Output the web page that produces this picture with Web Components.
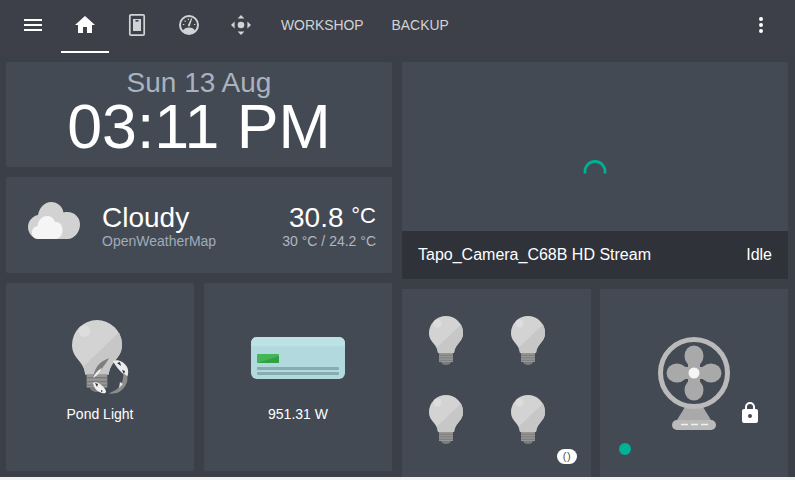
<!DOCTYPE html>
<html>
<head>
<meta charset="utf-8">
<title>Dashboard</title>
<style>
  html { background: #f1f3f3; }
  body { margin: 0; width: 795px; height: 480px; overflow: hidden; font-family: "Liberation Sans", Arial, sans-serif; }
</style>
</head>
<body>
<ha-dashboard>
  <top-bar slot="header"></top-bar>

  <clock-card slot="left"></clock-card>
  <weather-card slot="left"></weather-card>
  <div slot="left" style="display:grid;grid-template-columns:188px 188px;gap:10px">
    <tile-card label="Pond Light"><pond-icon></pond-icon></tile-card>
    <tile-card label="951.31 W"><ac-icon></ac-icon></tile-card>
  </div>

  <camera-card slot="right"></camera-card>
  <div slot="right" style="display:grid;grid-template-columns:189px 188px;gap:9px">
    <bulbs-card></bulbs-card>
    <fan-card></fan-card>
  </div>
</ha-dashboard>

<script>
const MDI = {
  menu: "M3,6H21V8H3V6M3,11H21V13H3V11M3,16H21V18H3V16Z",
  home: "M10,20V14H14V20H19V12H22L12,3L2,12H5V20H10Z",
  dots: "M12,16A2,2 0 0,1 14,18A2,2 0 0,1 12,20A2,2 0 0,1 10,18A2,2 0 0,1 12,16M12,10A2,2 0 0,1 14,12A2,2 0 0,1 12,14A2,2 0 0,1 10,12A2,2 0 0,1 12,10M12,4A2,2 0 0,1 14,6A2,2 0 0,1 12,8A2,2 0 0,1 10,6A2,2 0 0,1 12,4Z",
  lock: "M12,17A2,2 0 0,0 14,15C14,13.89 13.1,13 12,13A2,2 0 0,0 10,15A2,2 0 0,0 12,17M18,8A2,2 0 0,1 20,10V20A2,2 0 0,1 18,22H6A2,2 0 0,1 4,20V10C4,8.89 4.9,8 6,8H7V6A5,5 0 0,1 12,1A5,5 0 0,1 17,6V8H18M12,3A3,3 0 0,0 9,6V8H15V6A3,3 0 0,0 12,3Z"
};

// shared bulb drawing, 34x49 units
const BULB = `
  <path d="M17 0a17 17 0 0 1 17 17c0 5.500-3 8.500-5 11-1.800 2.300-3.500 4.500-4 9H9c-.5-4.500-2.200-6.700-4-9-2-2.500-5-5.500-5-11A17 17 0 0 1 17 0z" fill="#d3d3d3"/>
  <path d="M32 8.500A17 17 0 0 1 34 17c0 5.500-3 8.500-5 11-1.800 2.300-3.500 4.500-4 9H9c-.2-2-.7-3.800-1.300-5.300z" fill="#c7c7c7"/>
  <circle cx="8.500" cy="7.500" r="4" fill="#dddddd"/>
  <rect x="10" y="37" width="14" height="9" fill="#979797"/>
  <path d="M10 39.300h14M10 41.800h14M10 44.300h14" stroke="#7b7b7b" stroke-width="1"/>
  <path d="M12 46h10c-.5 2-2.500 3-5 3s-4.500-1-5-3z" fill="#7c7c7c"/>`;

class HaDashboard extends HTMLElement {
  constructor() {
    super();
    this.attachShadow({ mode: "open" });
  }
  connectedCallback() {
    this.shadowRoot.innerHTML = `
      <style>
        :host { display: block; height: 477px; background: #3b3f48; overflow: hidden; }
        .columns {
          display: grid;
          grid-template-columns: 386px 386px;
          column-gap: 10px;
          padding: 6px 0 0 6px;
        }
        .col { display: flex; flex-direction: column; gap: 10px; }
      </style>
      <slot name="header"></slot>
      <div class="columns">
        <div class="col"><slot name="left"></slot></div>
        <div class="col"><slot name="right"></slot></div>
      </div>`;
  }
}

class TopBar extends HTMLElement {
  constructor() {
    super();
    this.attachShadow({ mode: "open" });
  }
  connectedCallback() {
    this.shadowRoot.innerHTML = `
      <style>
        :host {
          display: flex;
          height: 56px;
          padding-left: 21px;
          padding-right: 22px;
          background: #3d4049;
          box-sizing: border-box;
          color: #fff;
        }
        svg { width: 24px; height: 24px; fill: currentColor; display: block; }
        .menu { margin: 13px 16px 0 0; width: 24px; }
        .tabs { display: flex; gap: 4px; height: 53px; flex: 1; }
        .tab {
          box-sizing: border-box;
          min-width: 48px;
          height: 53px;
          padding-top: 13px;
          display: flex;
          justify-content: center;
          color: #d2d3d6;
          font-size: 13.900px;
        }
        .tab.active { color: #fff; border-bottom: 2px solid #fff; }
        .tab.text { padding: 17px 12px 0; line-height: 16px; }
        .dots { margin-top: 13px; }
      </style>
      <div class="menu"><svg viewBox="0 0 24 24"><path d="${MDI.menu}"/></svg></div>
      <div class="tabs">
        <div class="tab active"><svg viewBox="0 0 24 24"><path d="${MDI.home}"/></svg></div>
        <div class="tab"><svg viewBox="0 0 24 24">
          <rect x="4.800" y="1.800" width="14.400" height="20.400" rx="1.200" fill="none" stroke="currentColor" stroke-width="1.700"/>
          <rect x="8" y="6" width="8" height="12"/>
          <rect x="10.500" y="7" width="3" height="1.600" fill="#3d4049"/>
        </svg></div>
        <div class="tab"><svg viewBox="0 0 24 24">
          <circle cx="12" cy="12" r="9" fill="none" stroke="currentColor" stroke-width="2"/>
          <path d="M5.500 18c1.500-2.500 3.800-3.600 6.500-3.600s5 1.100 6.500 3.600c-1.700 1.900-4 3-6.500 3s-4.800-1.100-6.500-3z"/>
          <path d="M11 12l3.200-6.800 1 .4-2.300 7.200a1 1 0 0 1-1.900-.8z"/>
          <path d="M5.800 11.500h1.500M7.600 7.600l1 1M11.400 5.500v1.500M16.900 11.500h1.500" stroke="currentColor" stroke-width="1.100"/>
        </svg></div>
        <div class="tab"><svg viewBox="0 0 24 24">
          <circle cx="12" cy="12" r="3.300"/>
          <path d="M12 2l3.400 3.600H8.600zM12 22l-3.400-3.600h6.800zM2 12l3.600-3.400v6.800zM22 12l-3.600 3.400V8.600z"/>
        </svg></div>
        <div class="tab text">WORKSHOP</div>
        <div class="tab text">BACKUP</div>
      </div>
      <svg class="dots" viewBox="0 0 24 24"><path d="${MDI.dots}"/></svg>`;
  }
}

class ClockCard extends HTMLElement {
  constructor() {
    super();
    this.attachShadow({ mode: "open" });
  }
  connectedCallback() {
    this.shadowRoot.innerHTML = `
      <style>
        :host {
          display: block;
          height: 105px;
          background: #444a54;
          border-radius: 2px;
          text-align: center;
          overflow: hidden;
        }
        .date { font-size: 28px; line-height: 28px; color: #a9b3bf; margin-top: 7px; }
        .time { font-size: 62.700px; line-height: 58px; color: #fff; }
      </style>
      <div class="date">Sun 13 Aug</div>
      <div class="time">03:11 PM</div>`;
  }
}

class WeatherCard extends HTMLElement {
  constructor() {
    super();
    this.attachShadow({ mode: "open" });
  }
  connectedCallback() {
    this.shadowRoot.innerHTML = `
      <style>
        :host {
          display: flex;
          height: 96px;
          align-items: center;
          background: #444a54;
          border-radius: 2px;
          padding: 0 16px 0 21px;
          box-sizing: border-box;
        }
        svg { width: 54px; height: 40px; display: block; margin-right: 21px; margin-bottom: 9px; }
        .name { flex: 1; padding-top: 3px; }
        .big { font-size: 28px; line-height: 28px; color: #fff; }
        .small { font-size: 14px; line-height: 16px; color: #9facbb; margin-top: 1px; }
        .temp { text-align: right; padding-top: 3px; }
        .temp .small { color: #b0b7c1; }
        .unit { font-size: 22px; line-height: 0; vertical-align: 4px; }
      </style>
      <svg viewBox="0 0 54 40">
        <path d="M24 1c6.500 0 11.500 4.500 12.500 10.500C38 11 39 11 40.500 11 47.500 11 53 16.500 53 23.500S47.500 38 40.500 38H13C6 38 1 32.500 1 26c0-6 4.500-11 10-12C12.500 6.500 17.500 1 24 1z" fill="#d2d2d2"/>
        <path d="M20 15c4 0 7 2.500 8 6 3.500-.5 7.500 2 7.500 8s-3.500 9-8 9H11c-4.500 0-6-3.500-6-6.500 0-3.500 2.500-6 5.500-6.500.5-5.500 4.500-10 9.500-10z" fill="#f5f5f5"/>
      </svg>
      <div class="name">
        <div class="big">Cloudy</div>
        <div class="small">OpenWeatherMap</div>
      </div>
      <div class="temp">
        <div class="big">30.8 <span class="unit">°C</span></div>
        <div class="small">30 °C / 24.2 °C</div>
      </div>`;
  }
}

class TileCard extends HTMLElement {
  constructor() {
    super();
    this.attachShadow({ mode: "open" });
  }
  connectedCallback() {
    this.shadowRoot.innerHTML = `
      <style>
        :host {
          display: flex;
          flex-direction: column;
          align-items: center;
          height: 188px;
          background: #444a54;
          border-radius: 2px;
        }
        .icon { height: 122px; display: flex; align-items: flex-end; }
        .label { font-size: 14px; line-height: 16px; color: #fff; margin-top: 1px; }
      </style>
      <div class="icon"><slot></slot></div>
      <div class="label">${this.getAttribute("label")}</div>`;
  }
}

class PondIcon extends HTMLElement {
  constructor() {
    super();
    this.attachShadow({ mode: "open" });
  }
  connectedCallback() {
    this.shadowRoot.innerHTML = `
      <style>
        :host { display: block; width: 62px; height: 76px; margin-left: 6px; margin-bottom: 9px; }
        svg { display: block; width: 62px; height: 76px; }
      </style>
      <svg viewBox="0 0 62 76">
        <g transform="scale(1.47)">${BULB}</g>
        <path d="M37 38l-6 3c-5 3-9 9-10 17 4-2 8-6 10-11 2-3 4-5 6-9z" fill="#7e7e7e"/>
        <path d="M21 58c2-5 5-8 9-10-2 5-5 8-9 10z" fill="#f0f0f0"/>
        <path d="M21 63c3-2 8 1 12 6 2 3 1 5-3 4-4-1-8-4-9-10z" fill="#f0f0f0"/>
        <path d="M23 63l3 1-1 3zM29 70l2 1-2 1z" fill="#2f2f2f"/>
        <path d="M41 41c5-2 11 1 14 6 2 4 1 8 0 10-4-3-9-7-14-16z" fill="#ececec"/>
        <path d="M45 43l3-1 1 4zM50 50l3 1-1 3z" fill="#2f2f2f"/>
        <path d="M55 56c2 6-3 14-10 17l-8 1c3-3 6-3 8-5 4-3 7-9 6-16z" fill="#8c8c8c"/>
        <path d="M48 62l3 2-4 4z" fill="#e6e6e6"/>
      </svg>`;
  }
}

class AcIcon extends HTMLElement {
  constructor() {
    super();
    this.attachShadow({ mode: "open" });
  }
  connectedCallback() {
    this.shadowRoot.innerHTML = `
      <style>
        :host { display: block; margin-bottom: 26px; }
        svg { display: block; width: 94px; height: 42px; }
      </style>
      <svg viewBox="0 0 94 42">
        <rect width="94" height="42" rx="6" fill="#b2dade"/>
        <path d="M6 0h82a6 6 0 0 1 6 6v3H0V6a6 6 0 0 1 6-6z" fill="#bde2e5"/>
        <rect x="6" y="17" width="22" height="9" rx="1" fill="#43b755"/>
        <path d="M6 26l22-7v7z" fill="#31a145"/>
        <rect x="6" y="30" width="82" height="3" rx="1" fill="#86aeb0"/>
        <rect x="6" y="35" width="82" height="3" rx="1" fill="#86aeb0"/>
      </svg>`;
  }
}

class CameraCard extends HTMLElement {
  constructor() {
    super();
    this.attachShadow({ mode: "open" });
  }
  connectedCallback() {
    this.shadowRoot.innerHTML = `
      <style>
        :host {
          display: flex;
          flex-direction: column;
          height: 217px;
          background: #444a54;
          border-radius: 2px 2px 0 0;
          overflow: hidden;
        }
        .view { flex: 1; display: flex; justify-content: center; padding-top: 96px; box-sizing: border-box; }
        svg { width: 24px; height: 18px; display: block; }
        .caption {
          display: flex;
          justify-content: space-between;
          height: 48px;
          box-sizing: border-box;
          padding: 0 16px;
          align-items: center;
          background: #30323a;
          color: #fff;
          font-size: 16px;
        }
      </style>
      <div class="view">
        <svg viewBox="0 0 24 18"><path d="M2.200 15.500A10 10 0 1 1 21.800 15.500" fill="none" stroke="#00b094" stroke-width="2.800"/></svg>
      </div>
      <div class="caption"><span>Tapo_Camera_C68B HD Stream</span><span>Idle</span></div>`;
  }
}

class BulbsCard extends HTMLElement {
  constructor() {
    super();
    this.attachShadow({ mode: "open" });
  }
  connectedCallback() {
    const bulb = `<svg viewBox="0 0 34 49">${BULB}</svg>`;
    this.shadowRoot.innerHTML = `
      <style>
        :host {
          display: block;
          position: relative;
          height: 188px;
          background: #444a54;
          box-sizing: border-box;
          padding: 27px 0 0 27px;
        }
        .grid { display: grid; grid-template-columns: 34px 34px; column-gap: 48px; row-gap: 30px; }
        svg { width: 34px; height: 49px; display: block; }
        .badge {
          position: absolute;
          left: 155px;
          top: 160px;
          width: 20px;
          height: 15px;
          border-radius: 8px;
          background: #fff;
          color: #555;
          font-size: 11px;
          letter-spacing: .5px;
          line-height: 15px;
          text-align: center;
        }
      </style>
      <div class="grid">${bulb}${bulb}${bulb}${bulb}</div>
      <div class="badge">()</div>`;
  }
}

class FanCard extends HTMLElement {
  constructor() {
    super();
    this.attachShadow({ mode: "open" });
  }
  connectedCallback() {
    this.shadowRoot.innerHTML = `
      <style>
        :host {
          display: flex;
          justify-content: center;
          position: relative;
          height: 188px;
          background: #444a54;
          box-sizing: border-box;
          padding-top: 48px;
        }
        .fan { width: 72px; height: 93px; display: block; }
        .lock { position: absolute; left: 138px; top: 112px; width: 24px; height: 24px; fill: #fff; }
        .dot { position: absolute; left: 19px; top: 154px; width: 12px; height: 12px; border-radius: 50%; background: #00b294; }
      </style>
      <svg class="fan" viewBox="0 0 72 93">
        <path d="M27 70h18l8 13H19z" fill="#a9a9a9"/>
        <circle cx="36" cy="36" r="33.500" fill="#444a54" stroke="#bababa" stroke-width="5"/>
        <g fill="#a9a9a9">
          <ellipse cx="36" cy="19" rx="9.500" ry="10.500"/>
          <ellipse cx="36" cy="53" rx="9.500" ry="10.500"/>
          <ellipse cx="19" cy="36" rx="10.500" ry="9.500"/>
          <ellipse cx="53" cy="36" rx="10.500" ry="9.500"/>
          <rect x="30" y="24" width="12" height="24"/>
          <rect x="24" y="30" width="24" height="12"/>
        </g>
        <circle cx="36" cy="36" r="5.500" fill="#f5f5f5"/>
        <rect x="14" y="83" width="44" height="10" rx="5" fill="#bababa"/>
        <path d="M23 87.500h7M33 87.500h7M43 87.500h7" stroke="#f0f0f0" stroke-width="1.400"/>
      </svg>
      <svg class="lock" viewBox="0 0 24 24"><path d="${MDI.lock}"/></svg>
      <div class="dot"></div>`;
  }
}

customElements.define("ha-dashboard", HaDashboard);
customElements.define("top-bar", TopBar);
customElements.define("clock-card", ClockCard);
customElements.define("weather-card", WeatherCard);
customElements.define("tile-card", TileCard);
customElements.define("pond-icon", PondIcon);
customElements.define("ac-icon", AcIcon);
customElements.define("camera-card", CameraCard);
customElements.define("bulbs-card", BulbsCard);
customElements.define("fan-card", FanCard);
</script>
</body>
</html>
